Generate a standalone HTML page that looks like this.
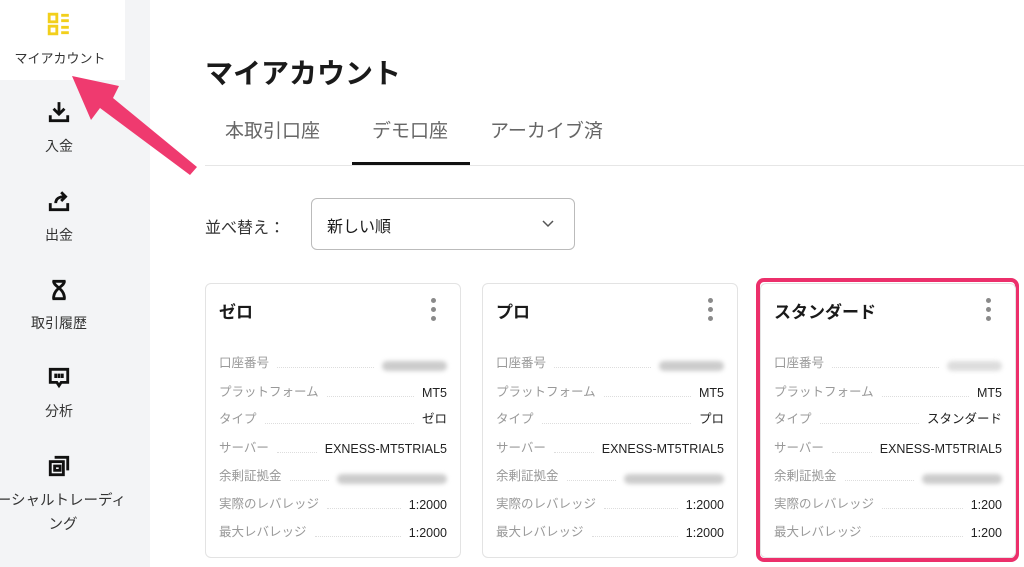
<!DOCTYPE html><html><head><meta charset="utf-8"><style>
*{margin:0;padding:0;box-sizing:border-box}
body{width:1024px;height:567px;overflow:hidden;background:#fff;font-family:"Liberation Sans","Noto Sans CJK JP",sans-serif;color:#1a1a1a;position:relative}
.side{position:absolute;left:0;top:0;width:150px;height:567px;background:#f3f4f6}
.act{position:absolute;left:0;top:0;width:125px;height:80px;background:#fff}
.it{position:absolute;left:0;width:118px;text-align:center;font-size:14px;color:#333}
.ic{position:absolute;left:47px}
.abs{position:absolute}
.card{position:absolute;top:283px;width:256px;height:275px;border:1px solid #e3e3e3;border-radius:6px;background:#fff}
.card h3{position:absolute;left:13px;top:14px;font-size:17px;font-weight:bold}
.dots{position:absolute;right:24px;top:14px;width:5px}
.dots i{display:block;width:5px;height:5px;border-radius:50%;background:#8a8a8a;margin-bottom:4px}
.row{position:absolute;left:13px;right:13px;height:18px;font-size:12.5px;display:flex;align-items:flex-end}
.row .k{color:#999}
.row .d{flex:1;border-bottom:1px dotted #ddd;margin:0 8px 3px}
.row .v{color:#222}
.blur{display:inline-block;height:10px;border-radius:5px;background:#ccc;filter:blur(2px)}
</style></head><body>
<div class="side"><div class="act"></div>
<svg class="ic" style="top:12px" width="24" height="24" viewBox="0 0 22 22" fill="none" stroke="#f2cf1b" stroke-width="2.6"><rect x="2" y="2" width="7" height="7"/><rect x="2" y="13" width="7" height="7"/><path d="M13 3h7M13 8h7M13 14h7M13 19h7"/></svg>
<div class="it" style="top:48px;left:1px;width:118px;font-size:13px">マイアカウント</div>
<svg class="ic" style="top:100px" width="24" height="24" viewBox="0 0 22 22" fill="none" stroke="#111" stroke-width="2.6"><path d="M11 2v11M6 8l5 5 5-5M3 14v5h16v-5"/></svg>
<div class="it" style="top:136px">入金</div>
<svg class="ic" style="top:189px" width="24" height="24" viewBox="0 0 22 22" fill="none" stroke="#111" stroke-width="2.6"><path d="M3 13v6h16v-6M8 13c0-4 3-6 8-6M13 3l4 4-4 4"/></svg>
<div class="it" style="top:225px">出金</div>
<svg class="ic" style="top:278px" width="24" height="24" viewBox="0 0 22 22" fill="none" stroke="#111" stroke-width="2.6"><path d="M5 3h12M5 19h12M6 3c0 5 10 6 10 16M16 3c0 5-10 6-10 16"/></svg>
<div class="it" style="top:313px">取引履歴</div>
<svg class="ic" style="top:366px" width="24" height="24" viewBox="0 0 22 22" fill="none" stroke="#111" stroke-width="2.6"><path d="M3 3h16v12H13l-2 3-2-3H3z"/><path d="M8 7v4M11 7v4M14 7v4"/></svg>
<div class="it" style="top:401px">分析</div>
<svg class="ic" style="top:454px" width="24" height="24" viewBox="0 0 22 22" fill="none" stroke="#111" stroke-width="2.6"><rect x="3" y="7" width="12" height="12"/><path d="M7 3h12v12"/><path d="M7 11h5v4H7z"/></svg>
<div class="it" style="top:489px;left:-20px;width:146px;line-height:24px;font-size:14.5px;text-align:right;direction:rtl"><span style="direction:ltr;unicode-bidi:embed;display:block;text-align:right">ソーシャルトレーディ</span><span style="display:block;text-align:center;padding-left:20px">ング</span></div>
</div>
<div class="abs" style="left:205px;top:52px;font-size:28px;font-weight:bold">マイアカウント</div>
<div class="abs" style="left:205px;top:165px;width:819px;height:1px;background:#e6e6e6"></div>
<div class="abs" style="left:225px;top:116px;font-size:19px;color:#666">本取引口座</div>
<div class="abs" style="left:372px;top:116px;font-size:19px;color:#666">デモ口座</div>
<div class="abs" style="left:352px;top:162px;width:118px;height:3px;background:#111"></div>
<div class="abs" style="left:490px;top:116px;font-size:19px;color:#666">アーカイブ済</div>
<div class="abs" style="left:205px;top:214px;font-size:16px;color:#333">並べ替え：</div>
<div class="abs" style="left:311px;top:198px;width:264px;height:52px;border:1px solid #bbb;border-radius:6px"><span class="abs" style="left:15px;top:14px;font-size:16px">新しい順</span><svg class="abs" style="left:230px;top:21px" width="12" height="8" viewBox="0 0 12 8" fill="none" stroke="#555" stroke-width="1.5"><path d="M1 1l5 5 5-5"/></svg></div>

<div class="card" style="left:205px"><h3>ゼロ</h3><div class="dots"><i></i><i></i><i></i></div>
<div class="row" style="top:69px"><span class="k">口座番号</span><span class="d"></span><span class="blur" style="width:65px"></span></div>
<div class="row" style="top:98px"><span class="k">プラットフォーム</span><span class="d"></span><span class="v">MT5</span></div>
<div class="row" style="top:125px"><span class="k">タイプ</span><span class="d"></span><span class="v">ゼロ</span></div>
<div class="row" style="top:154px"><span class="k">サーバー</span><span class="d"></span><span class="v">EXNESS-MT5TRIAL5</span></div>
<div class="row" style="top:182px"><span class="k">余剰証拠金</span><span class="d"></span><span class="blur" style="width:110px"></span></div>
<div class="row" style="top:210px"><span class="k">実際のレバレッジ</span><span class="d"></span><span class="v">1:2000</span></div>
<div class="row" style="top:238px"><span class="k">最大レバレッジ</span><span class="d"></span><span class="v">1:2000</span></div></div>

<div class="card" style="left:482px"><h3>プロ</h3><div class="dots"><i></i><i></i><i></i></div>
<div class="row" style="top:69px"><span class="k">口座番号</span><span class="d"></span><span class="blur" style="width:65px"></span></div>
<div class="row" style="top:98px"><span class="k">プラットフォーム</span><span class="d"></span><span class="v">MT5</span></div>
<div class="row" style="top:125px"><span class="k">タイプ</span><span class="d"></span><span class="v">プロ</span></div>
<div class="row" style="top:154px"><span class="k">サーバー</span><span class="d"></span><span class="v">EXNESS-MT5TRIAL5</span></div>
<div class="row" style="top:182px"><span class="k">余剰証拠金</span><span class="d"></span><span class="blur" style="width:100px"></span></div>
<div class="row" style="top:210px"><span class="k">実際のレバレッジ</span><span class="d"></span><span class="v">1:2000</span></div>
<div class="row" style="top:238px"><span class="k">最大レバレッジ</span><span class="d"></span><span class="v">1:2000</span></div></div>

<div class="abs" style="left:756px;top:278px;width:263px;height:284px;border:4px solid #ec2f6b;border-radius:8px"></div>
<div class="card" style="left:760px"><h3>スタンダード</h3><div class="dots"><i></i><i></i><i></i></div>
<div class="row" style="top:69px"><span class="k">口座番号</span><span class="d"></span><span class="blur" style="width:55px;background:#ddd"></span></div>
<div class="row" style="top:98px"><span class="k">プラットフォーム</span><span class="d"></span><span class="v">MT5</span></div>
<div class="row" style="top:125px"><span class="k">タイプ</span><span class="d"></span><span class="v">スタンダード</span></div>
<div class="row" style="top:154px"><span class="k">サーバー</span><span class="d"></span><span class="v">EXNESS-MT5TRIAL5</span></div>
<div class="row" style="top:182px"><span class="k">余剰証拠金</span><span class="d"></span><span class="blur" style="width:80px"></span></div>
<div class="row" style="top:210px"><span class="k">実際のレバレッジ</span><span class="d"></span><span class="v">1:200</span></div>
<div class="row" style="top:238px"><span class="k">最大レバレッジ</span><span class="d"></span><span class="v">1:200</span></div></div>

<svg class="abs" style="left:0;top:0" width="220" height="200"><path d="M197 167L113 98 L119 86 L72 76 L91 120 L100 108 L190 175Z" fill="#ef3a6f"/></svg>
</body></html>
